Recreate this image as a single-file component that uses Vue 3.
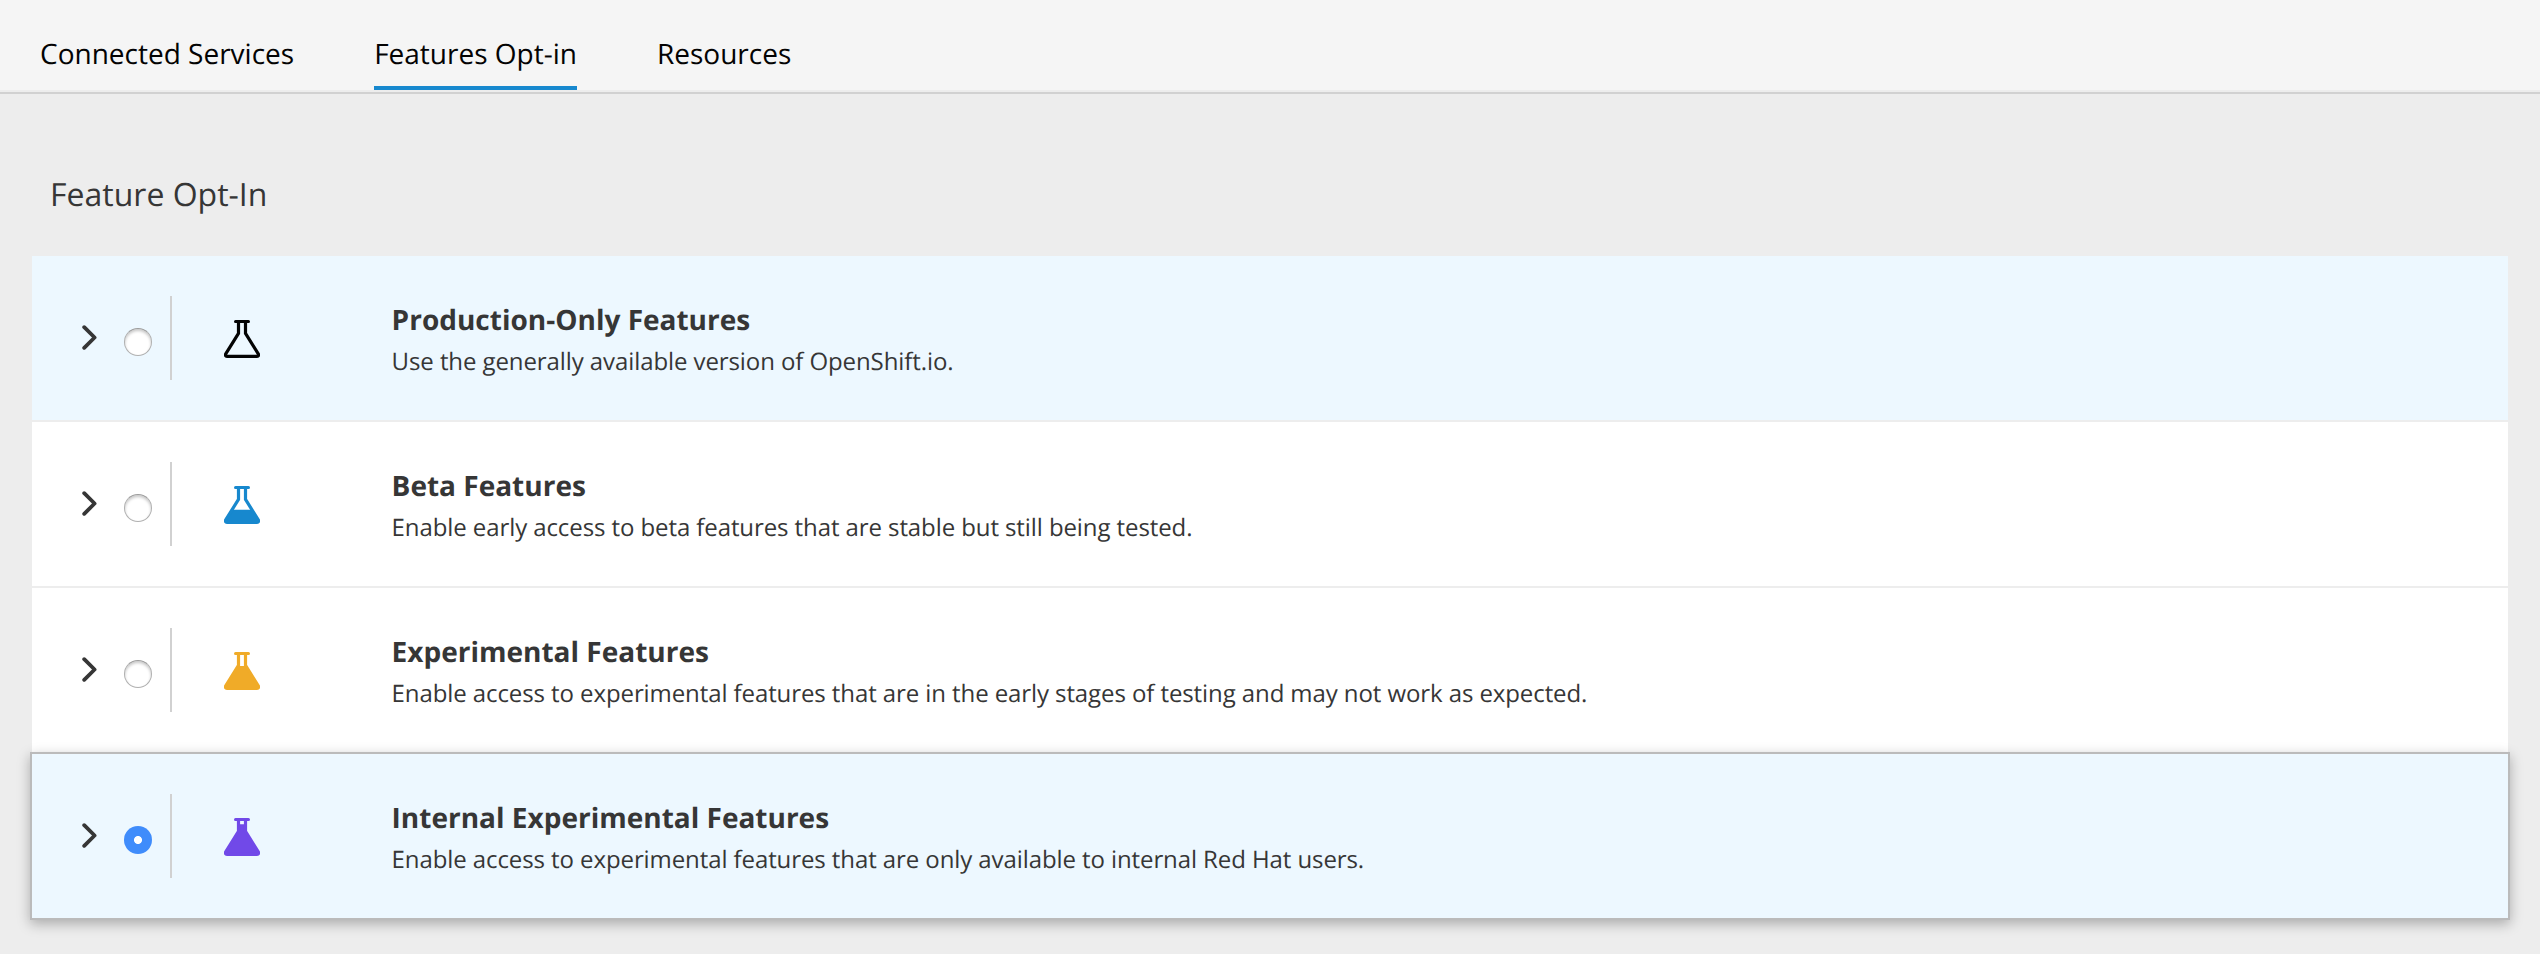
<script setup>
import { ref } from 'vue'

const tabs = ['Connected Services', 'Features Opt-in', 'Resources']
const activeTab = ref('Features Opt-in')
const selected = ref('internal')

const features = [
  {
    id: 'production',
    title: 'Production-Only Features',
    text: 'Use the generally available version of OpenShift.io.',
    liquid: '',
    tinted: true
  },
  {
    id: 'beta',
    title: 'Beta Features',
    text: 'Enable early access to beta features that are stable but still being tested.',
    liquid: 'M8 23.7H28L34.3 34V36.4H1.7V34Z'
  },
  {
    id: 'experimental',
    title: 'Experimental Features',
    text: 'Enable access to experimental features that are in the early stages of testing and may not work as expected.',
    liquid: 'M14 14H22L34.3 34V36.4H1.7V34Z'
  },
  {
    id: 'internal',
    title: 'Internal Experimental Features',
    text: 'Enable access to experimental features that are only available to internal Red Hat users.',
    liquid: 'M14 6.2H22V14L34.3 34V36.4H1.7V34L14 14Z',
    tinted: true
  }
]
</script>

<template>
  <div class="page">
    <nav class="tabs">
      <a
        v-for="tab in tabs"
        :key="tab"
        class="tab"
        :class="{ active: tab === activeTab }"
        @click="activeTab = tab"
      >{{ tab }}</a>
    </nav>
    <main class="content">
      <h2 class="heading">Feature Opt-In</h2>
      <div class="list">
        <section
          v-for="f in features"
          :key="f.id"
          class="row"
          :class="[f.id, { tinted: f.tinted, selected: f.id === selected }]"
        >
          <svg class="chevron" viewBox="0 0 15 25">
            <path d="M2.2 2.2L12.6 12.5L2.2 22.8" />
          </svg>
          <input v-model="selected" class="radio" type="radio" name="feature" :value="f.id" />
          <div class="divider"></div>
          <svg class="flask" viewBox="0 0 36 38">
            <path class="liquid" :d="f.liquid" />
            <path
              class="glass"
              d="M14.5 2V13.4L1.9 33.6C.9 35.2 1.5 36.4 3 36.4H33C34.5 36.4 35.1 35.2 34.1 33.6L21.5 13.4V2"
            />
            <rect class="rim" x="10" y="0" width="16" height="3" rx="1.5" />
          </svg>
          <div class="copy">
            <h3 class="title">{{ f.title }}</h3>
            <p class="text">{{ f.text }}</p>
          </div>
        </section>
      </div>
    </main>
  </div>
</template>

<style>
body {
  margin: 0;
  background: #ededed;
}
</style>

<style scoped>
.page {
  box-sizing: border-box;
  height: 954px;
  overflow: hidden;
  background: #ededed;
  color: #363636;
  font-family: "Open Sans", sans-serif;
  text-rendering: geometricPrecision;
}
.tabs {
  display: flex;
  gap: 80px;
  box-sizing: border-box;
  height: 94px;
  padding: 34px 40px 0;
  background: linear-gradient(#f5f5f5 90px, #ededed 90px);
  border-bottom: 2px solid #d1d1d1;
}
.tab {
  box-sizing: border-box;
  height: 56px;
  font-size: 28px;
  line-height: 40px;
  color: #030303;
  white-space: nowrap;
  cursor: pointer;
}
.tab.active {
  border-bottom: 4px solid #1788ce;
}
.content {
  padding: 79px 32px 0;
}
.heading {
  margin: 0 0 39px;
  padding-left: 18px;
  font-size: 32px;
  font-weight: 400;
  line-height: 44px;
}
.row {
  display: flex;
  align-items: flex-start;
  height: 164px;
  background: #fff;
  border-bottom: 2px solid #ededed;
}
.row.tinted {
  background: #edf8ff;
}
.row.selected {
  position: relative;
  margin: -2px -2px 0;
  border: 2px solid #bbb;
  box-shadow: 0 4px 12px rgba(3, 3, 3, 0.28);
}
.chevron {
  width: 15px;
  height: 25px;
  margin: 69px 0 0 50px;
  fill: none;
  stroke: #363636;
  stroke-width: 3.8;
  stroke-linecap: round;
  stroke-linejoin: round;
}
.radio {
  appearance: none;
  box-sizing: border-box;
  width: 28px;
  height: 28px;
  margin: 72px 0 0 27px;
  border: 1px solid #b0b0b0;
  border-top-color: #9c9c9c;
  border-radius: 50%;
  background: #fff;
  box-shadow: inset 0 2px 3px rgba(0, 0, 0, 0.22);
}
.radio:checked {
  border: 0;
  background: radial-gradient(circle, #fff 3.6px, #3f8cfb 4.4px);
  box-shadow: none;
}
.divider {
  width: 2px;
  height: 84px;
  margin: 40px 0 0 18px;
  background: #d1d1d1;
}
.flask {
  width: 36px;
  height: 38px;
  margin: 64px 0 0 52px;
  color: #030303;
}
.beta .flask {
  color: #1788ce;
}
.experimental .flask {
  color: #f0ab28;
}
.internal .flask {
  color: #7149e8;
}
.liquid,
.rim {
  fill: currentColor;
}
.glass {
  fill: none;
  stroke: currentColor;
  stroke-width: 3.2;
  stroke-linejoin: round;
}
.copy {
  margin: 44px 0 0 131.6px;
}
.title {
  margin: 0 0 2px;
  font-size: 28px;
  font-weight: 700;
  line-height: 40px;
}
.text {
  margin: 0;
  font-size: 24px;
  line-height: 40px;
  letter-spacing: -0.09px;
}
</style>
